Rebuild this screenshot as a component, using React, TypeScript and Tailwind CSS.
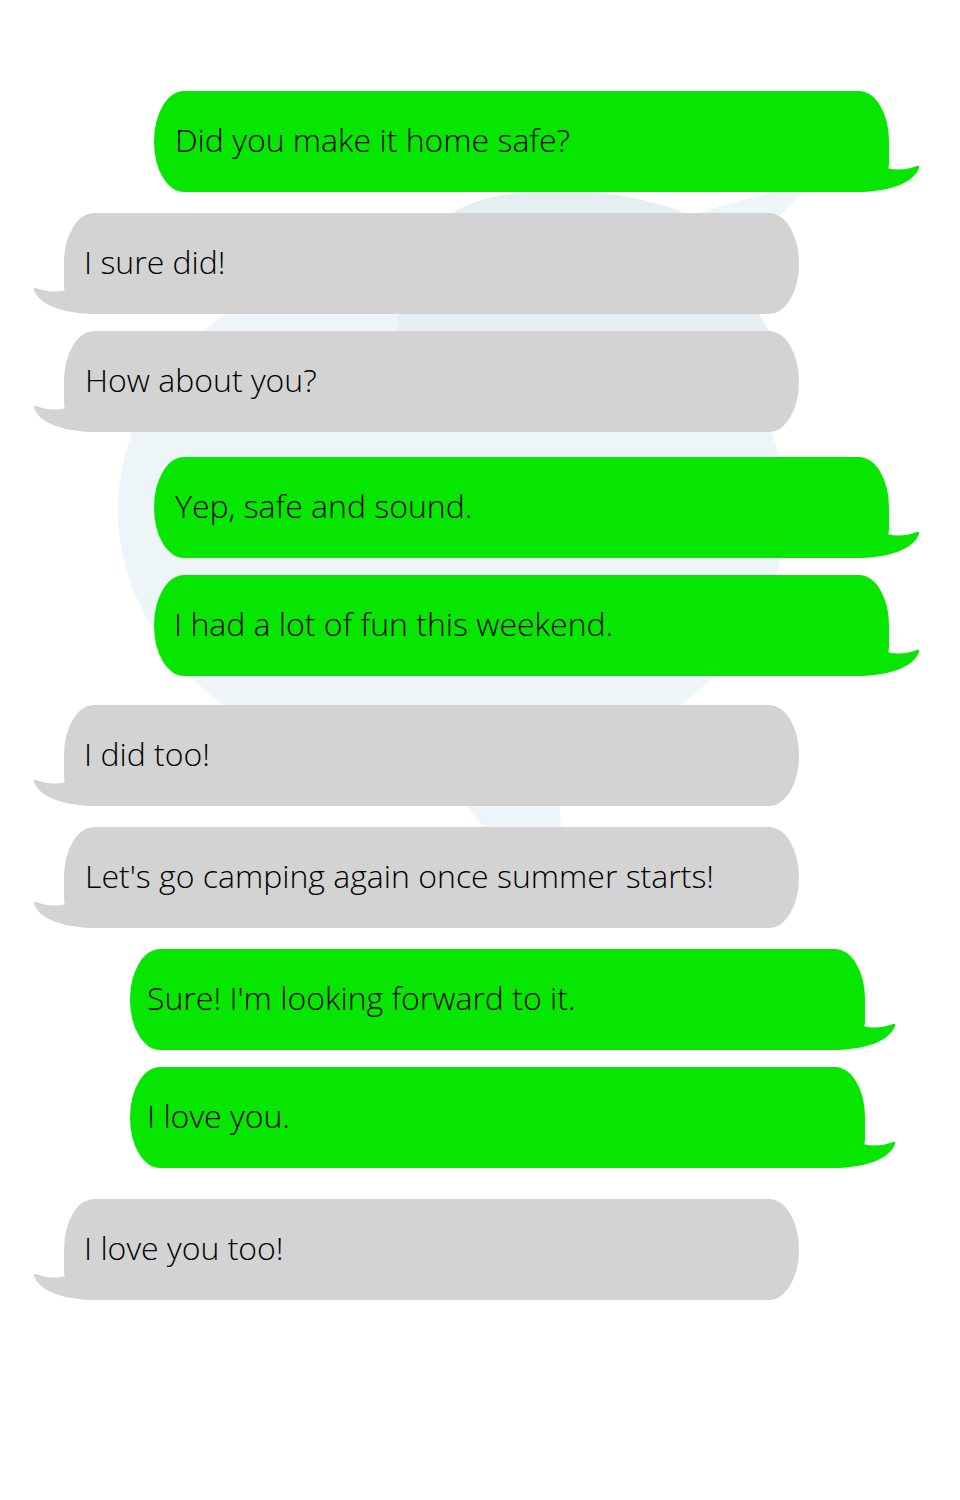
import clsx from "clsx";

type Msg = { text: string; mine: boolean; offset: string; gap: string; pad: string };

const messages: Msg[] = [
  { text: "Did you make it home safe?", mine: true, offset: "ml-[154px]", gap: "mt-0", pad: "pl-[21px]" },
  { text: "I sure did!", mine: false, offset: "ml-[64px]", gap: "mt-[21px]", pad: "pl-[20px]" },
  { text: "How about you?", mine: false, offset: "ml-[64px]", gap: "mt-[17px]", pad: "pl-[21px]" },
  { text: "Yep, safe and sound.", mine: true, offset: "ml-[154px]", gap: "mt-[25px]", pad: "pl-[21px]" },
  { text: "I had a lot of fun this weekend.", mine: true, offset: "ml-[154px]", gap: "mt-[17px]", pad: "pl-[20px]" },
  { text: "I did too!", mine: false, offset: "ml-[64px]", gap: "mt-[29px]", pad: "pl-[20px]" },
  { text: "Let's go camping again once summer starts!", mine: false, offset: "ml-[64px]", gap: "mt-[21px]", pad: "pl-[21px]" },
  { text: "Sure! I'm looking forward to it.", mine: true, offset: "ml-[130px]", gap: "mt-[21px]", pad: "pl-[17px]" },
  { text: "I love you.", mine: true, offset: "ml-[130px]", gap: "mt-[17px]", pad: "pl-[17px]" },
  { text: "I love you too!", mine: false, offset: "ml-[64px]", gap: "mt-[31px]", pad: "pl-[20px]" },
];

function Tail({ mine }: { mine: boolean }) {
  return (
    <svg
      viewBox="0 0 62 30"
      className={clsx(
        "absolute bottom-0 w-[62px] h-[30px]",
        mine ? "right-[-32px] fill-[#07e600]" : "left-[-32px] -scale-x-100 fill-[#d3d3d3]"
      )}
    >
      <path d="M30 0 Q30 4 28 6 Q42 10 58 4 Q61 3 60 6 C56 17 40 29 0 30 L0 0 Z" />
    </svg>
  );
}

function Bubble({ msg }: { msg: Msg }) {
  return (
    <div
      className={clsx(
        "relative h-[101px] w-[735px] flex items-center pb-[4px] text-[32px] font-[350] text-black",
        msg.offset,
        msg.gap,
        msg.pad,
        msg.mine
          ? "bg-[#07e600] rounded-tl-[30px_50px] rounded-tr-[30px_50px] rounded-bl-[30px_50px] rounded-br-[30px]"
          : "bg-[#d3d3d3] rounded-tl-[30px_50px] rounded-tr-[30px_50px] rounded-br-[30px_50px] rounded-bl-[30px]"
      )}
    >
      <span className="relative">{msg.text}</span>
      <Tail mine={msg.mine} />
    </div>
  );
}

export default function App() {
  return (
    <div className="relative w-[960px] h-[1500px] bg-white overflow-hidden font-['Open_Sans','Noto_Sans',sans-serif]">
      {/* faint watermark behind the chat */}
      <svg className="absolute top-0 left-0 w-[960px] h-[1500px]" viewBox="0 0 960 1500">
        <ellipse cx="452" cy="510" rx="334" ry="268" fill="#edf5f8" />
        <path d="M690 215 L804 183 L812 183 L782 213 L752 258 L700 258 Z" fill="#edf5f8" />
        <path d="M398 430 L398 320 C410 240 440 200 520 193 C600 186 670 200 712 228 L768 330 L775 430 Z" fill="#e5eef1" />
        <path d="M410 740 L555 740 L562 840 Q566 872 592 884 Q540 882 500 846 Z" fill="#edf5f8" />
      </svg>
      <div className="relative flex flex-col pt-[91px]">
        {messages.map((m, i) => (
          <Bubble key={i} msg={m} />
        ))}
      </div>
    </div>
  );
}
